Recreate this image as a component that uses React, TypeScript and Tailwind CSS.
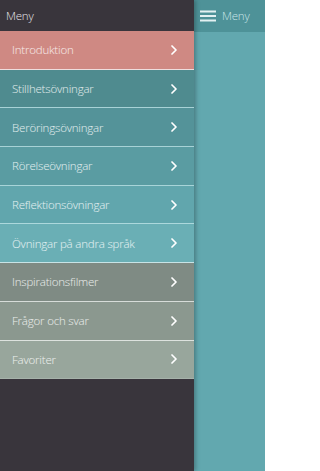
const items = [
  { label: "Introduktion", bg: "bg-[#cf8983]", line: "border-[#efdede]" },
  { label: "Stillhetsövningar", bg: "bg-[#4f8b8f]", line: "border-[#a8d2d6]" },
  { label: "Beröringsövningar", bg: "bg-[#549399]", line: "border-[#a8d2d6]" },
  { label: "Rörelseövningar", bg: "bg-[#5a9ca2]", line: "border-[#a8d4d8]" },
  { label: "Reflektionsövningar", bg: "bg-[#61a6ad]", line: "border-[#acd8dc]" },
  { label: "Övningar på andra språk", bg: "bg-[#6aafb5]", line: "border-[#c8e4e6]" },
  { label: "Inspirationsfilmer", bg: "bg-[#7f8b84]", line: "border-[#d7dcd9]" },
  { label: "Frågor och svar", bg: "bg-[#8b988f]", line: "border-[#dde2de]" },
  { label: "Favoriter", bg: "bg-[#98a69c]", line: "border-[#a6b2aa]" },
];

function Chevron() {
  return (
    <svg width="6" height="10" viewBox="0 0 6 10" fill="none">
      <path d="M1 1 L5 5 L1 9" stroke="white" strokeWidth="1.7" strokeLinecap="round" strokeLinejoin="round" />
    </svg>
  );
}

export default function App() {
  return (
    <div
      className="flex w-[265px] h-[471px] overflow-hidden bg-[#62a8af]"
      style={{ fontFamily: '"Open Sans", "Liberation Sans", sans-serif' }}
    >
      <div className="w-[194px] shrink-0 flex flex-col bg-[#39353c] relative z-10 shadow-[2px_0_4px_rgba(0,0,0,0.25)]">
        <div className="h-[31px] flex items-center px-[6px] text-[11.5px] font-light tracking-[-0.2px] text-[#e6e4e8]">
          Meny
        </div>
        {items.map((item) => (
          <div
            key={item.label}
            className={`h-[38.7px] flex items-center justify-between pl-[12px] pr-[17px] border-b ${item.bg} ${item.line}`}
          >
            <span className="text-[11.5px] font-light text-white/85 tracking-[-0.2px]">
              {item.label}
            </span>
            <Chevron />
          </div>
        ))}
      </div>
      <div className="flex-1 flex flex-col">
        <div className="h-[32px] flex items-center gap-[6px] pl-[6px] bg-[#4e9298]">
          <svg width="16" height="12" viewBox="0 0 16 12">
            <rect x="0" y="0.5" width="16" height="2" fill="#e3f1f2" />
            <rect x="0" y="5" width="16" height="2" fill="#e3f1f2" />
            <rect x="0" y="9.5" width="16" height="2" fill="#e3f1f2" />
          </svg>
          <span className="text-[11.5px] font-light tracking-[-0.2px] text-[#c9e4e7]">Meny</span>
        </div>
      </div>
    </div>
  );
}
